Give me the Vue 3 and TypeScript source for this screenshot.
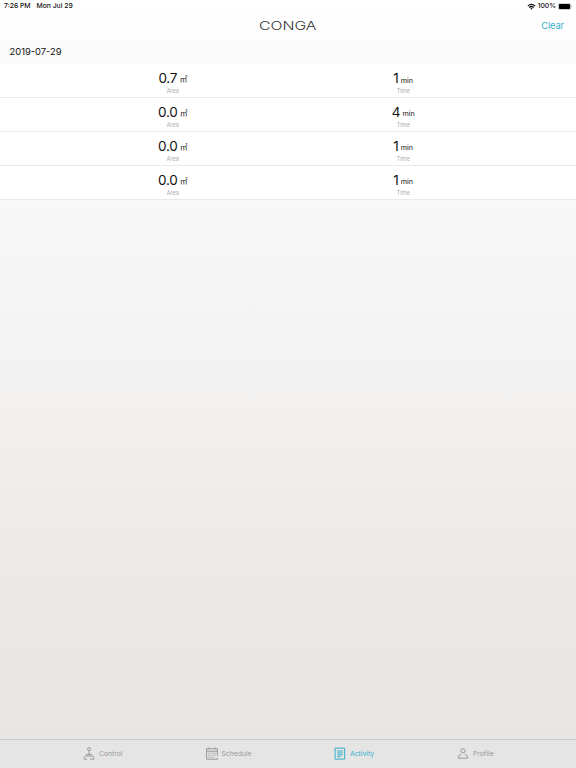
<script setup lang="ts">
interface Clean {
  id: number
  area: string
  minutes: number
}

const cleans: Clean[] = [
  { id: 1, area: '0.7', minutes: 1 },
  { id: 2, area: '0.0', minutes: 4 },
  { id: 3, area: '0.0', minutes: 1 },
  { id: 4, area: '0.0', minutes: 1 },
]
</script>

<template>
  <div class="screen">
    <header class="top">
      <div class="status">
        <span class="clock">7:26 PM</span>
        <span class="day">Mon Jul 29</span>
        <svg class="wifi" viewBox="0 0 9 7" width="9" height="7">
          <path d="M.5 2.5Q4.5-1.1 8.5 2.5L7.7 3.4Q4.5.6 1.3 3.4ZM1.9 4Q4.5 1.7 7.1 4L6.3 4.9Q4.5 3.4 2.7 4.9ZM3.3 5.4Q4.5 4.5 5.7 5.4L4.5 6.7Z" fill="#111" />
        </svg>
        <span class="percent">100%</span>
        <svg class="battery" viewBox="0 0 15 7" width="15" height="7">
          <rect x=".3" y=".3" width="12.4" height="6.2" rx="1.6" fill="#fff" stroke="#999" stroke-width=".5" />
          <rect x=".9" y=".9" width="11.2" height="5" rx="1" fill="#000" />
          <path d="M13.4 2.3Q14.4 3.4 13.4 4.5Z" fill="#777" />
        </svg>
      </div>
      <div class="nav">
        <svg class="logo" viewBox="0 0 58 12" width="58" height="12">
          <text x="0" y="10.2" textLength="57.5" lengthAdjust="spacingAndGlyphs">CONGA</text>
        </svg>
        <button class="clear">Clear</button>
      </div>
    </header>

    <h2 class="date">2019-07-29</h2>
    <ul class="list">
      <li v-for="c in cleans" :key="c.id" class="row">
        <div class="cell area">
          <p class="value">{{ c.area }}<span class="unit square">㎡</span></p>
          <p class="label">Area</p>
        </div>
        <div class="cell time">
          <p class="value">{{ c.minutes }}<span class="unit">min</span></p>
          <p class="label">Time</p>
        </div>
      </li>
    </ul>

    <nav class="tabs">
      <a class="tab control">
        <svg viewBox="0 0 12 13" width="12" height="13">
          <circle cx="6" cy="2.2" r="1.5" />
          <path d="M6 3.7V7.6M3.4 8.2V7.4H8.6V8.2M4.2 12.2H1.2V10.6Q1.2 9 2.8 9H9.2Q10.8 9 10.8 10.6V12.2H7.2" />
        </svg>
        <span>Control</span>
      </a>
      <a class="tab schedule">
        <svg viewBox="0 0 12 13" width="12" height="13">
          <path d="M11.4 9V1.7H.6V12.2H11.4V11M.6 4.2H11.4M3 .4V2.4M9 .4V2.4" />
          <path class="dots" d="M2.3 6.2H10M2.3 8.2H10M2.3 10.2H8" />
        </svg>
        <span>Schedule</span>
      </a>
      <a class="tab activity active">
        <svg viewBox="0 0 12 13" width="12" height="13">
          <path d="M1.1 1.1H10.7V12.1H1.1ZM3.2 4H8.8M3.2 5.9H8.8M3.2 7.8H8.8M3.2 9.6H6.6" />
        </svg>
        <span>Activity</span>
      </a>
      <a class="tab profile">
        <svg viewBox="0 0 12 13" width="12" height="13">
          <circle cx="6" cy="3.8" r="2.1" />
          <path d="M4.2 7.3Q1.2 7.8 1.2 11.2H10.8Q10.8 7.8 7.8 7.3" />
        </svg>
        <span>Profile</span>
      </a>
    </nav>
  </div>
</template>

<style>
body {
  margin: 0;
}
</style>

<style scoped>
.screen {
  width: 576px;
  height: 768px;
  display: flex;
  flex-direction: column;
  overflow: hidden;
  font-family: Inter, "Noto Sans CJK SC", sans-serif;
  color: #111;
  background: linear-gradient(#fff 0, #f9f8f9 199px, #f2f1f0 400px, #ebe8e7 600px, #e9e5e4 739px);
}
.top {
  height: 40px;
  background: linear-gradient(#fff, #fdfdfd);
}
.status {
  height: 12px;
  display: flex;
  align-items: center;
  padding: 0 3px 0 4px;
  font-size: 6.8px;
  font-weight: 500;
  line-height: 12px;
}
.clock {
  width: 32.5px;
}
.day {
  flex: 1;
}
.percent {
  margin: 0 2px 0 1.5px;
}
.nav {
  height: 28px;
  display: grid;
  grid-template-columns: 1fr 58px 1fr;
  align-items: center;
}
.logo {
  grid-column: 2;
  overflow: visible;
}
.logo text {
  font-size: 12px;
  font-weight: 300;
  fill: #333;
}
.clear {
  justify-self: end;
  margin: 0 12px 0 0;
  padding: 0;
  border: 0;
  background: none;
  font: 400 9.2px/12px Inter, sans-serif;
  letter-spacing: -0.05px;
  color: #35b3cb;
}
.date {
  height: 24px;
  margin: 0;
  padding-left: 9.5px;
  font-size: 9.4px;
  font-weight: 400;
  line-height: 24px;
  background: #fafafa;
}
.list {
  margin: 0;
  padding: 0;
  list-style: none;
}
.row {
  height: 33.9px;
  box-sizing: border-box;
  display: flex;
  justify-content: center;
  border-bottom: 1px solid #e9e9e9;
  background: #fff;
}
.cell {
  width: 230.4px;
  text-align: center;
}
.value {
  height: 18px;
  margin: 5px 0 0;
  font-size: 13.5px;
  line-height: 18px;
  letter-spacing: -0.25px;
}
.unit {
  position: relative;
  top: -0.5px;
  margin-left: 2.2px;
  font-size: 7.2px;
  letter-spacing: 0;
}
.square {
  top: -1px;
  margin-left: 2.6px;
  font-family: "Noto Sans CJK SC", sans-serif;
  font-size: 7.5px;
  line-height: 1;
}
.label {
  margin: 0;
  font-size: 5.5px;
  line-height: 8px;
  color: #aaa;
}
.tabs {
  height: 29px;
  box-sizing: border-box;
  margin-top: auto;
  display: flex;
  border-top: 1px solid #cfccce;
  background: #e6e5e5;
}
.tab {
  display: flex;
  align-items: center;
  gap: 4px;
  padding-bottom: 1px;
  font-size: 6.8px;
  color: #999;
}
.tab svg {
  fill: none;
  stroke: currentColor;
  stroke-width: 1;
}
.tab .dots {
  stroke-width: 1.1;
  stroke-dasharray: 1.1 1;
}
.control {
  box-sizing: border-box;
  width: 205.5px;
  padding-left: 83px;
}
.schedule {
  width: 128.5px;
}
.activity {
  width: 123px;
}
.active {
  color: #32afc8;
}
</style>
